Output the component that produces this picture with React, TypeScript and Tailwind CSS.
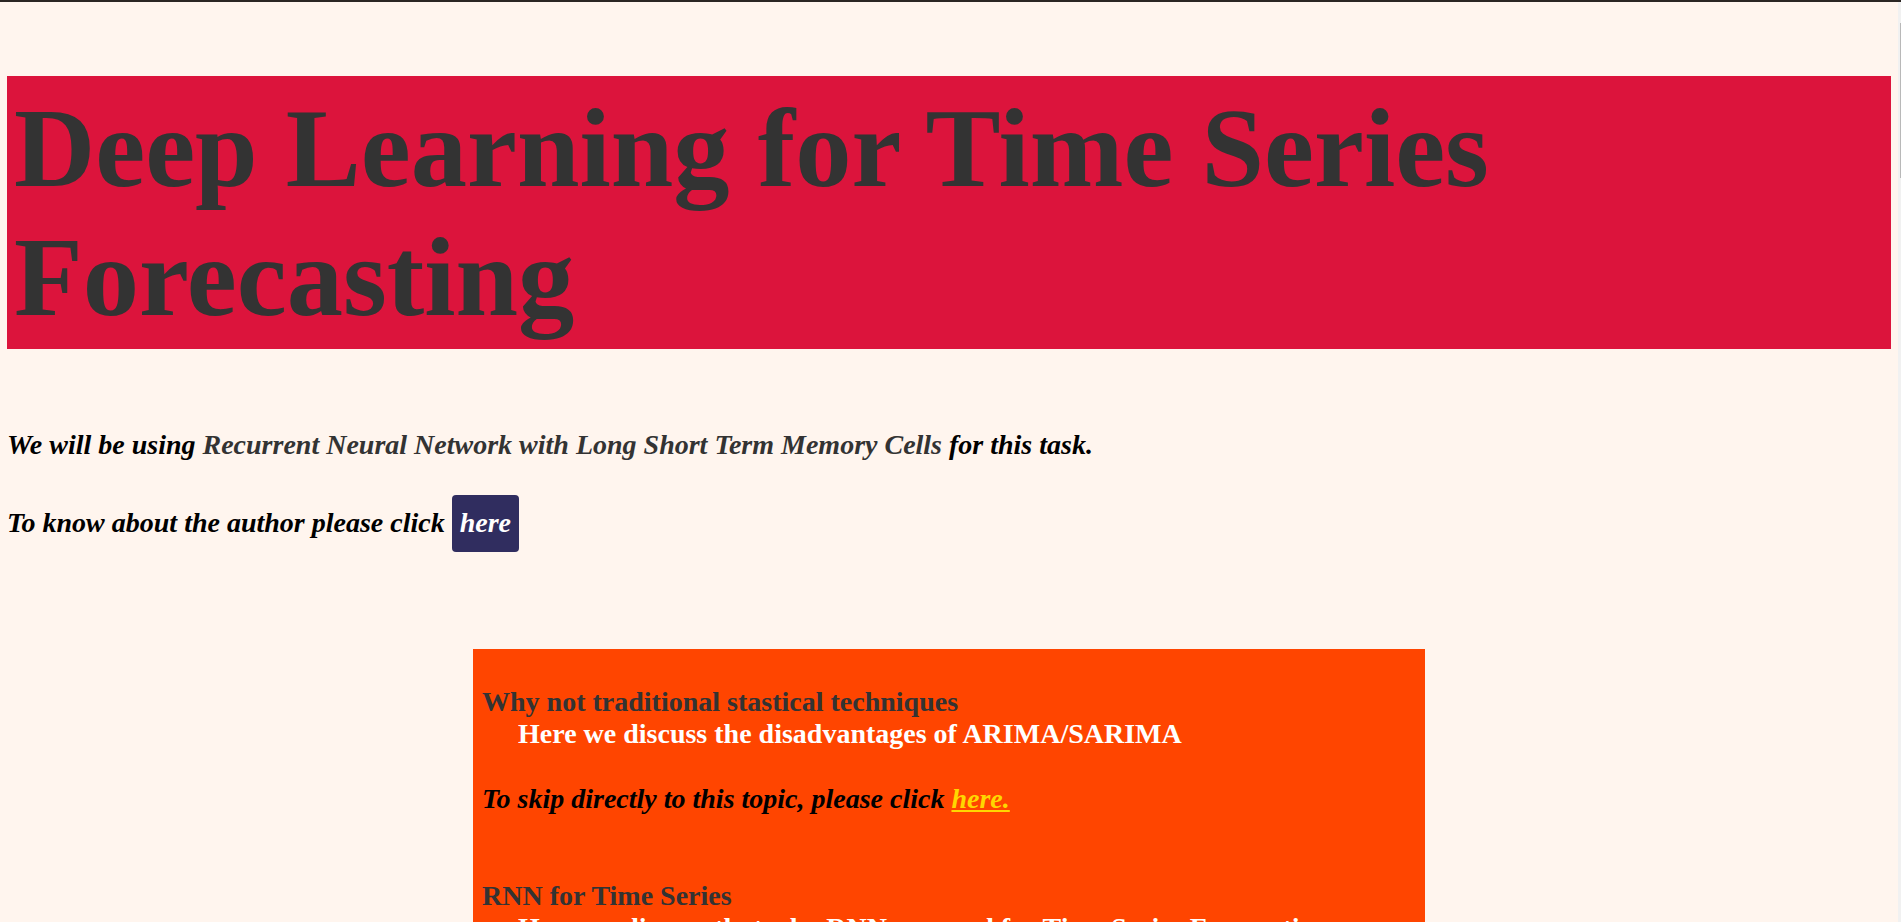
import React from 'react';

const serif = { fontFamily: '"Liberation Serif", "Times New Roman", serif' };

const topics = [
  { title: 'Why not traditional stastical techniques', body: 'Here we discuss the disadvantages of ARIMA/SARIMA' },
  { title: 'RNN for Time Series', body: 'Here we discuss that why RNN are used for Time Series Forecasting' },
];

export default function App() {
  return (
    <div className="h-[922px] overflow-hidden bg-[#fff5ee] flex flex-col" style={serif}>
      <div className="h-[2px] bg-[#2b2623] shrink-0" />
      <div className="flex flex-1 min-h-0">
        <main className="flex-1 min-w-0 px-[7px] pt-[74px]">
          <h1 className="bg-[#dc143c] text-[#333] font-bold text-[112.5px] leading-[128.7px] px-[7px] py-[8px]">
            Deep Learning for Time Series Forecasting
          </h1>

          <p className="mt-[80px] text-[28px] leading-[32px] font-bold italic text-black">
            We will be using{' '}
            <span className="text-[#333]">Recurrent Neural Network with Long Short Term Memory Cells</span>{' '}
            for this task.
          </p>
          <p className="mt-[34px] text-[28px] leading-[32px] font-bold italic text-black">
            To know about the author please click{' '}
            <a className="inline-block bg-[#302d5f] text-white rounded-[4px] px-[8px] pt-[12px] pb-[13px]">here</a>
          </p>

          <section className="mt-[97px] mx-auto w-[952px] bg-[#ff4500] px-[9px] pt-[37px] text-[28px] leading-[32px] font-bold">
            {topics.map((t, i) => (
              <div key={t.title} className={i > 0 ? 'mt-[65px]' : ''}>
                <div className="text-[#333]">{t.title}</div>
                <div className="pl-[36px] text-white">{t.body}</div>
                <p className="mt-[33px] italic text-black">
                  To skip directly to this topic, please click{' '}
                  <a className="text-[#ffd700] underline">here.</a>
                </p>
              </div>
            ))}
          </section>
        </main>
        <div className="w-[3px] shrink-0 bg-[#f1f1f1] flex flex-col items-end">
          <div className="h-[21px]" />
          <div className="h-[155px] w-[1px] bg-[#b8b8b8]" />
        </div>
      </div>
    </div>
  );
}
